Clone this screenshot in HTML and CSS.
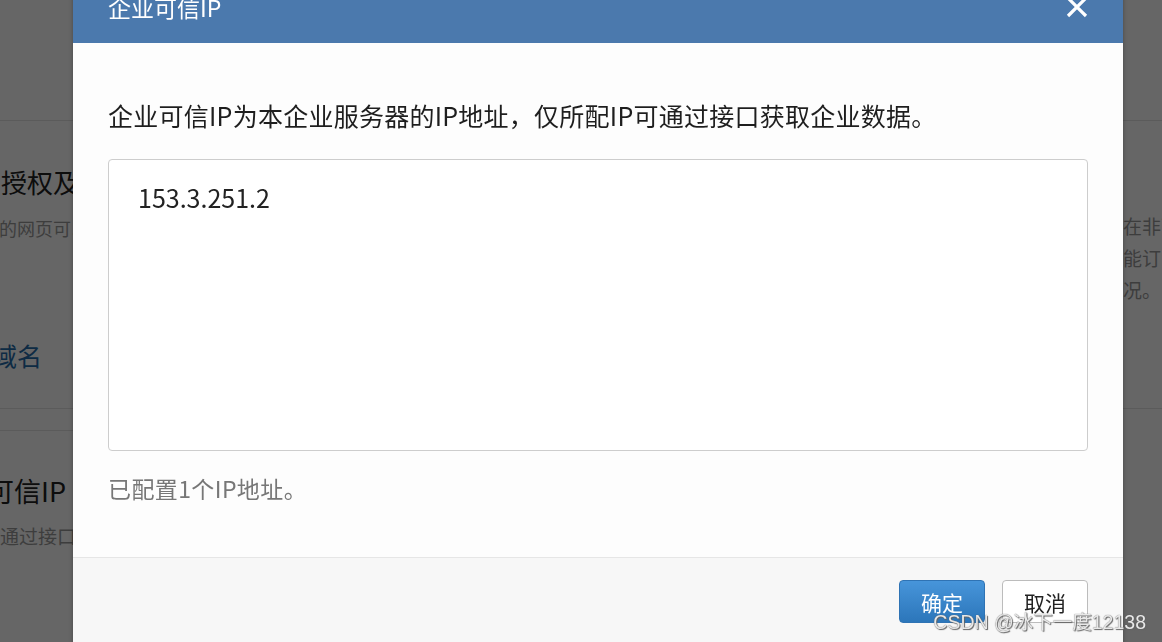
FILE: index.html
```
<!DOCTYPE html>
<html lang="zh-CN">

<head>
    <meta charset="UTF-8">
    <meta name="viewport" content="width=device-width, initial-scale=1.0">
    <title>企业可信IP</title>
    <link rel="stylesheet" href="styles.css">
</head>

<body>
    <!-- page behind the dialog -->
    <div class="page">
        <div class="page-top"></div>

        <div class="page-row">
            <div class="side-left">
                <h2 class="sec-title sec-title-1">网页授权及JS-SDK</h2>
                <p class="sec-desc sec-desc-1">名的网页可以使用JS-SDK</p>
                <a class="sec-link">可信域名</a>
            </div>
            <div class="side-right">
                <p class="sec-note">在非可信域名<br>能订阅消息<br>况。</p>
            </div>
        </div>

        <div class="page-row2">
            <div class="side-left">
                <div class="sec-line"></div>
                <h2 class="sec-title sec-title-2">企业可信IP</h2>
                <p class="sec-desc sec-desc-2">可通过接口获取企业数据</p>
            </div>
        </div>
    </div>

    <div class="mask"></div>

    <!-- dialog -->
    <div class="dialog">
        <div class="dialog-head">
            <h3 class="dialog-title">企业可信IP</h3>
            <span class="dialog-close">
                <svg width="22" height="22" viewBox="0 0 22 22">
                    <path d="M2 2 L20 20 M20 2 L2 20" stroke="#fff" stroke-width="3.2" fill="none" />
                </svg>
            </span>
        </div>

        <div class="dialog-body">
            <p class="intro">企业可信IP为本企业服务器的IP地址，仅所配IP可通过接口获取企业数据。</p>
            <textarea class="ip-box" readonly>153.3.251.2</textarea>
            <p class="count">已配置1个IP地址。</p>
        </div>

        <div class="dialog-foot">
            <button class="btn btn-ok" type="button">确定</button>
            <button class="btn btn-cancel" type="button">取消</button>
        </div>
    </div>

    <div class="watermark">CSDN @冰下一度12138</div>
</body>

</html>
```
FILE: styles.css
```
body {
    margin: 0;
    font-family: "Noto Sans CJK SC", "Noto Sans", sans-serif;
    background-color: #fff;
    overflow: hidden;
    height: 642px;
}

/* ---- background page ---- */

.page {
    width: 100%;
}

.page-top {
    height: 120px;
    border-bottom: 1px solid #e4e4e4;
}

.page-row {
    display: flex;
    justify-content: space-between;
    height: 287px;
    border-bottom: 1px solid #e4e4e4;
}

.page-row2 {
    display: flex;
}

.side-left {
    width: 73px;
    overflow: hidden;
    white-space: nowrap;
}

.side-right {
    width: 39px;
    overflow: hidden;
    white-space: nowrap;
}

.sec-title {
    margin: 0;
    font-size: 26px;
    line-height: 36px;
    font-weight: normal;
    color: #222;
}

.sec-title-1 {
    margin-top: 43px;
    margin-left: -51px;
}

.sec-title-2 {
    margin-top: 42px;
    margin-left: -67px;
    font-size: 27px;
}

.sec-desc {
    margin: 0;
    font-size: 18px;
    line-height: 28px;
    color: #9a9a9a;
}

.sec-desc-1 {
    margin-top: 14px;
    margin-left: -19px;
}

.sec-desc-2 {
    margin-top: 13px;
    margin-left: -19px;
    font-size: 19px;
}

.sec-link {
    display: block;
    margin-top: 96px;
    margin-left: -58px;
    font-size: 25px;
    line-height: 34px;
    color: #256baa;
}

.sec-note {
    margin: 0;
    padding-top: 89px;
    font-size: 19px;
    line-height: 32px;
    color: #999;
}

.sec-line {
    margin-top: 21px;
    border-top: 1px solid #e4e4e4;
}

.mask {
    position: fixed;
    top: 0;
    left: 0;
    right: 0;
    bottom: 0;
    background-color: rgba(0, 0, 0, 0.6);
}

/* ---- dialog ---- */

.dialog {
    position: absolute;
    top: -20px;
    left: 73px;
    width: 1050px;
    background-color: #fdfdfd;
    box-shadow: 0 0 4px rgba(0, 0, 0, 0.3);
}

.dialog-head {
    display: flex;
    justify-content: space-between;
    height: 63px;
    padding: 0 35px;
    background-color: #4b79ad;
}

.dialog-title {
    margin: 0;
    font-size: 23px;
    line-height: 54px;
    font-weight: normal;
    color: #fff;
}

.dialog-close {
    display: flex;
    align-items: center;
    height: 54px;
}

.dialog-body {
    padding: 54px 35px 52px;
}

.intro {
    margin: 0;
    font-size: 25px;
    line-height: 36px;
    letter-spacing: 0.25px;
    color: #1e1e1e;
}

.ip-box {
    display: block;
    width: 100%;
    height: 292px;
    margin-top: 26px;
    padding: 19px 29px;
    box-sizing: border-box;
    border: 1px solid #cdcdcd;
    border-radius: 4px;
    background-color: #fff;
    font-family: "Noto Sans CJK SC", "Noto Sans", sans-serif;
    font-size: 25px;
    line-height: 36px;
    color: #222;
    resize: none;
    outline: none;
}

.count {
    margin: 20px 0 0;
    font-size: 23px;
    line-height: 34px;
    letter-spacing: 0.4px;
    color: #777;
}

.dialog-foot {
    display: flex;
    justify-content: flex-end;
    gap: 17px;
    padding: 22px 35px 22px;
    border-top: 1px solid #e6e6e6;
    background-color: #f7f7f7;
}

.btn {
    width: 86px;
    height: 43px;
    padding: 0;
    border-radius: 4px;
    font-family: "Noto Sans CJK SC", "Noto Sans", sans-serif;
    font-size: 21px;
    cursor: pointer;
}

.btn-ok {
    border: 1px solid #2f73b4;
    background: linear-gradient(#4795da, #2c76ba);
    color: #fff;
}

.btn-cancel {
    border: 1px solid #bcbcbc;
    background-color: #fff;
    color: #222;
}

.watermark {
    position: fixed;
    right: 16px;
    bottom: 9px;
    font-family: "Liberation Sans", "Noto Sans CJK SC", sans-serif;
    font-size: 19.5px;
    line-height: 22px;
    color: #e8e8e8;
    text-shadow: 0 0 1px #555, 1px 1px 1px #666;
}
```
